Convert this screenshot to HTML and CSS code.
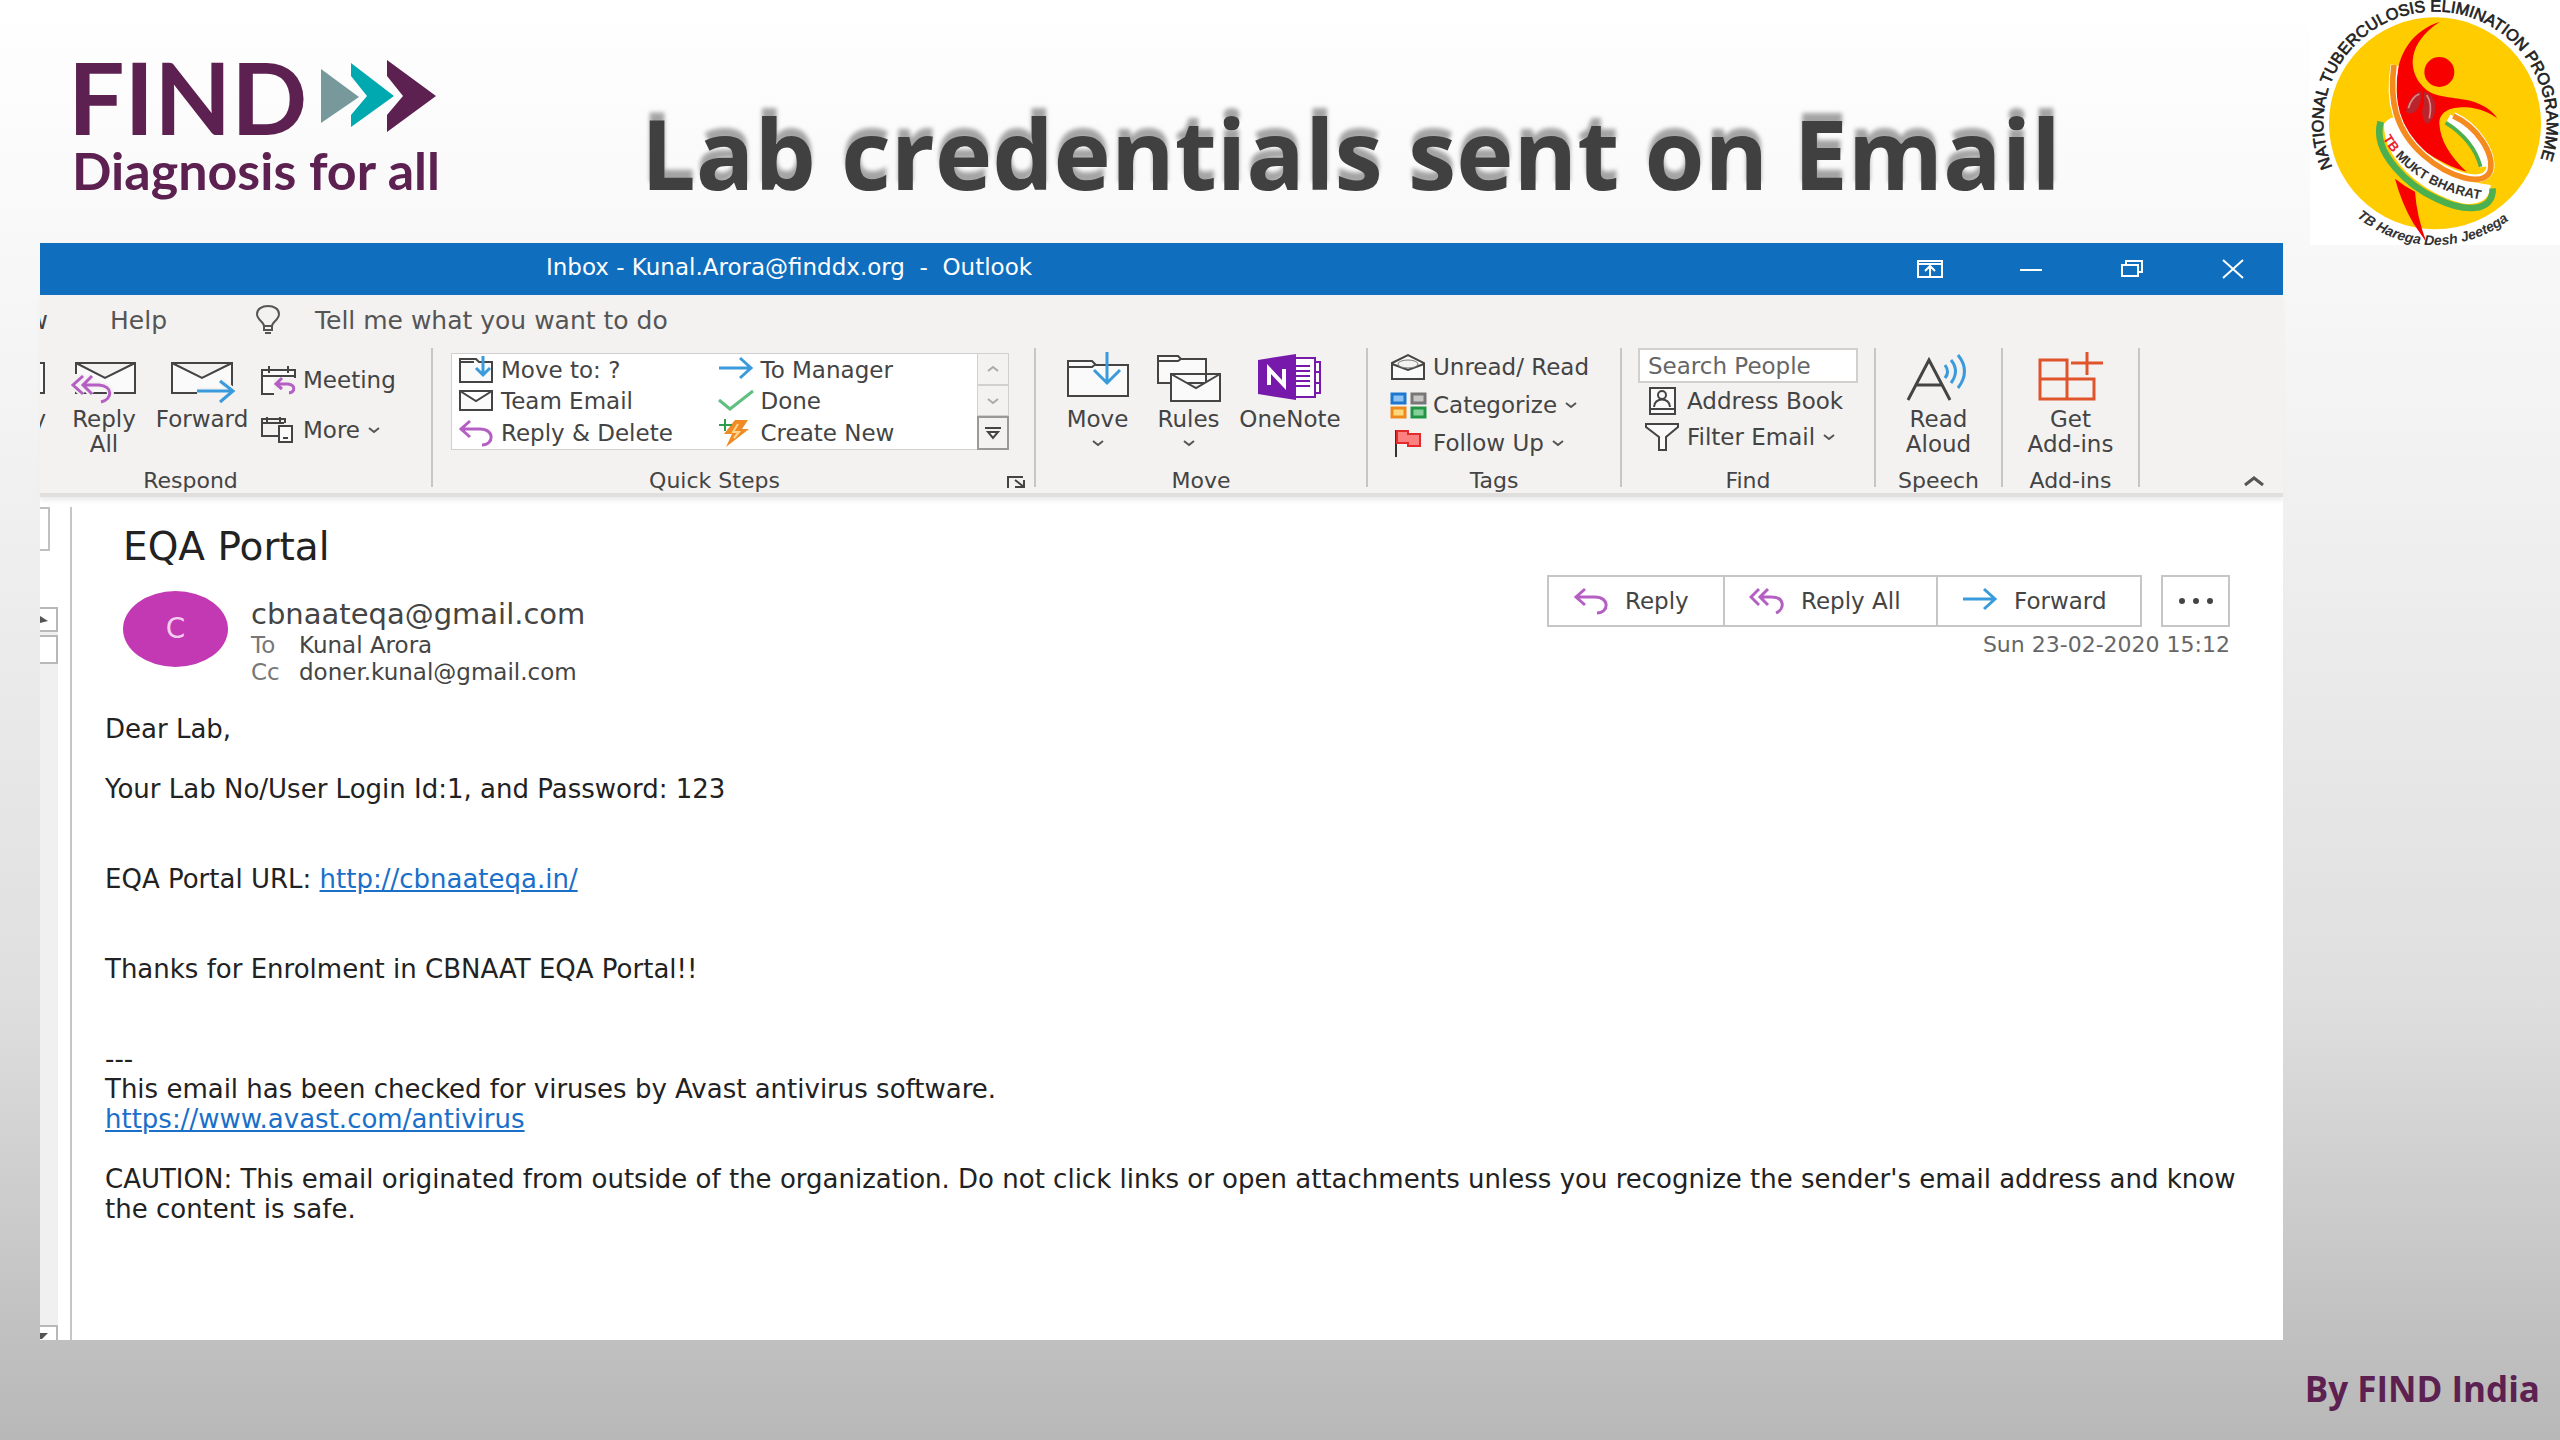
FILE: index.html
```html
<!DOCTYPE html>
<html lang="en">
<head>
<meta charset="utf-8">
<title>Lab credentials sent on Email</title>
<link rel="stylesheet" href="styles.css">
</head>
<body>
<svg class="sprite" aria-hidden="true">
  <symbol id="reply" viewBox="0 0 36 28"><path d="M12 2 3 10l9 8M3 10h19c15 0 14 16 2 16" fill="none" stroke="#b55fc4" stroke-width="3"/></symbol>
  <symbol id="reply-all" viewBox="0 0 36 28"><path d="M10 2 2 10l8 8M19 2l-8 8 8 8M11 10h11c14 0 14 12 5 16" fill="none" stroke="#b55fc4" stroke-width="3"/></symbol>
  <symbol id="arrow" viewBox="0 0 36 28"><path d="M1 12h32M22 2l11 10-11 10" fill="none" stroke="#3a9bdc" stroke-width="3"/></symbol>
  <symbol id="chev" viewBox="0 0 14 8"><path d="M2 2l5 4 5-4" fill="none" stroke="#555" stroke-width="2"/></symbol>
  <symbol id="chev-up" viewBox="0 0 22 12"><path d="M2 10l9-7 9 7" fill="none" stroke="#555" stroke-width="3"/></symbol>
  <symbol id="mail" viewBox="0 0 36 28"><path d="M2 4h32v19H2zM2 4l16 10L34 4" fill="#fafafa" stroke="#444" stroke-width="2"/></symbol>
</svg>
<main class="slide">
  <header class="slide-head">
    <div class="brand">
      <div class="brand-top">
        <span class="brand-name">FIND</span>
        <svg class="brand-arrows" viewBox="0 0 116 74" aria-hidden="true"><path d="M0 10l38 28L0 64z" fill="#77999b"/><path d="M30 4l43 33-43 31V56l16-19-16-20z" fill="#00a9b0"/><path d="M66 1l49 36-49 36V56l16-19-16-20z" fill="#5c2150"/></svg>
      </div>
      <div class="brand-tag">Diagnosis for all</div>
    </div>
    <h1 class="slide-title">Lab credentials sent on Email</h1>
    <svg class="emblem" viewBox="90 0 750 735" role="img" aria-label="National Tuberculosis Elimination Programme">
      <rect x="90" width="750" height="735" fill="#fff"/>
      <circle cx="465" cy="370" r="318" fill="#fc0"/>
      <path d="M312 372C330 350 345 350 350 360 380 430 470 520 570 545L632 555C630 600 600 612 560 612 470 600 310 500 312 372z" fill="#fff"/>
      <path d="M505 355Q595 405 612 500" fill="none" stroke="#fff" stroke-width="26"/>
      <path d="M497 368Q580 420 602 500" fill="none" stroke="#4cb050" stroke-width="11"/>
      <path d="M480 65C400 90 350 160 350 250 348 340 370 400 430 450 470 480 520 505 560 515 510 470 480 420 478 370 478 330 520 320 560 322 600 325 630 340 652 355 630 320 580 300 540 297 500 290 450 290 425 255 385 210 380 130 480 65z" fill="#f90000"/>
      <circle cx="478" cy="216" r="45" fill="#f90000"/>
      <path d="M345 536Q365 610 400 670L440 728Q410 650 405 575 375 560 345 536z" fill="#f90000"/>
      <path d="M378 335Q385 285 425 273 425 320 405 335 390 345 378 335zM432 275Q470 285 466 330 460 365 440 372 418 350 432 310z" fill="#b8252d"/>
      <path d="M385 325Q395 290 418 282M440 285Q458 310 448 355" fill="none" stroke="#df8c8c" stroke-width="5"/>
      <path d="M344 195C325 300 345 390 430 465 510 530 610 560 630 510 640 460 590 380 520 348" fill="none" stroke="#fff" stroke-width="24"/>
      <path d="M342 195C328 300 345 390 430 465 510 535 610 560 630 515 645 460 590 380 520 348" fill="none" stroke="#f58a1f" stroke-width="17"/>
      <path d="M302 365C275 460 390 560 470 596 550 635 640 640 638 565" fill="none" stroke="#4cb050" stroke-width="20"/>
      <path id="arc-top" d="M157 501A335 335 0 1 1 773 501" fill="none"/>
      <path id="arc-bottom" d="M230 650A366 366 0 0 0 702 648" fill="none"/>
      <path id="arc-band" d="M308 415Q400 575 640 605" fill="none"/>
      <text class="em-top"><textPath href="#arc-top">NATIONAL TUBERCULOSIS ELIMINATION PROGRAMME</textPath></text>
      <text class="em-bottom"><textPath href="#arc-bottom">TB Harega Desh Jeetega</textPath></text>
      <text class="em-band"><textPath href="#arc-band"><tspan fill="#e8202a">TB</tspan> MUKT BHARAT</textPath></text>
    </svg>
  </header>

  <section class="window">
    <div class="titlebar">
      <span class="titlebar-text">Inbox - Kunal.Arora@finddx.org&nbsp; -&nbsp; Outlook</span>
      <div class="win-controls">
        <button class="win-btn" aria-label="Ribbon display options"><svg width="28" height="20" viewBox="0 0 28 20"><path d="M2 2h24v16H2zM2 5h24M14 17V8M9 12l5-5 5 5" fill="none" stroke="#fff" stroke-width="2"/></svg></button>
        <button class="win-btn" aria-label="Minimize"><svg width="28" height="20" viewBox="0 0 28 20"><path d="M3 11h22" stroke="#fff" stroke-width="2"/></svg></button>
        <button class="win-btn" aria-label="Restore"><svg width="28" height="20" viewBox="0 0 28 20"><path d="M4 6h16v11H4zM8 6V2h16v11h-4" fill="none" stroke="#fff" stroke-width="2"/></svg></button>
        <button class="win-btn" aria-label="Close"><svg width="28" height="20" viewBox="0 0 28 20"><path d="M4 1l20 18M24 1L4 19" stroke="#fff" stroke-width="2"/></svg></button>
      </div>
    </div>

    <div class="ribbon">
      <nav class="tabs">
        <span class="tab-cut">w</span>
        <a class="tab" href="#help">Help</a>
        <svg width="26" height="30" viewBox="0 0 26 30" aria-hidden="true"><path d="M9 21c0-4-7-6-7-12C2 4 7 1 13 1s11 3 11 8c0 6-7 8-7 12zM9 21v4h8v-4M10 28h6" fill="none" stroke="#555" stroke-width="2"/></svg>
        <a class="tell" href="#tell">Tell me what you want to do</a>
      </nav>
      <div class="groups">
        <div class="group">
          <div class="group-body">
            <div class="cut"><svg width="6" height="48" viewBox="0 0 6 48" aria-hidden="true"><path d="M0 11h4v30H0" fill="#fafafa" stroke="#444" stroke-width="2"/></svg><span>y</span></div>
            <button class="big w96"><svg width="66" height="48" viewBox="0 0 66 48"><path d="M5 11h59v30H5zM5 11l29 15 30-15" fill="#fafafa" stroke="#444" stroke-width="2"/><path d="M0 22h14v18H6v-4H0z" fill="#f3f2f1"/><path d="M12 24 2 33l10 9M21 24l-9 9 9 9M12 33h17c14 2 14 15 0 18" fill="none" stroke="#f3f2f1" stroke-width="7"/><path d="M12 24 2 33l10 9M21 24l-9 9 9 9M12 33h16c14 1 14 14 2 17" fill="none" stroke="#b55fc4" stroke-width="3"/></svg><span>Reply<br>All</span></button>
            <button class="big w100"><svg width="66" height="48" viewBox="0 0 66 48"><path d="M3 11h60v30H3zM3 11l30 15 30-15" fill="#fafafa" stroke="#444" stroke-width="2"/><path d="M28 39h36M52 29l12 10-12 10" fill="none" stroke="#f3f2f1" stroke-width="7"/><path d="M28 39h36M51 29l13 10-13 11" fill="none" stroke="#3a9bdc" stroke-width="3"/></svg><span>Forward</span></button>
            <div class="stack stack-wide">
              <button class="row"><svg width="36" height="30" viewBox="0 0 36 30"><path d="M2 5h33v24H2zM2 11h33M9 1v7M28 1v7" fill="#fafafa" stroke="#444" stroke-width="2"/><path d="M14 13h24v18H14z" fill="#f3f2f1"/><path d="M22 13l-6 6 6 5M16 19h12c8 1 7 8 1 9" fill="none" stroke="#b55fc4" stroke-width="3"/></svg>Meeting</button>
              <button class="row"><svg width="36" height="30" viewBox="0 0 36 30"><path d="M18 21H2V4h23v4M2 8h22M7 2v5M20 2v5" fill="none" stroke="#444" stroke-width="2"/><path d="M19 11h13v16H19zM23 23h5" fill="#fafafa" stroke="#444" stroke-width="2"/></svg>More<svg class="chev"><use href="#chev"/></svg></button>
            </div>
          </div>
          <div class="label label-cut">Respond</div>
        </div>

        <div class="group">
          <div class="group-body quick">
            <div class="quick-list">
              <button class="row"><svg width="36" height="28" viewBox="0 0 36 28"><path d="M2 3h16l3 3h13v20H2zM2 6h14" fill="#fafafa" stroke="#444" stroke-width="2"/><path d="M25 0v18M18 12l7 7 7-7" fill="none" stroke="#3a9bdc" stroke-width="3"/></svg>Move to: ?</button>
              <button class="row"><svg width="36" height="28"><use href="#arrow"/></svg>To Manager</button>
              <button class="row"><svg width="36" height="28"><use href="#mail"/></svg>Team Email</button>
              <button class="row"><svg width="36" height="28" viewBox="0 0 36 28"><path d="M1 13l11 9L35 4" fill="none" stroke="#5fbf80" stroke-width="3"/></svg>Done</button>
              <button class="row"><svg width="36" height="28"><use href="#reply"/></svg>Reply &amp; Delete</button>
              <button class="row"><svg width="36" height="28" viewBox="0 0 36 28"><path d="M17 1h13l-6 9h7L8 28l6-13H6z" fill="#f08a24"/><path d="M20 5l-5 8h6l-5 6" fill="none" stroke="#ffd58a" stroke-width="2"/><path d="M1 6h13M7 0v12" stroke="#2e9e4f" stroke-width="2"/></svg>Create New</button>
            </div>
            <div class="quick-scroll">
              <button aria-label="Previous" class="dim"><svg class="chev" viewBox="0 0 14 8"><path d="M2 6l5-4 5 4" fill="none" stroke="#aaa" stroke-width="2"/></svg></button>
              <button aria-label="Next" class="dim"><svg class="chev" viewBox="0 0 14 8"><path d="M2 2l5 4 5-4" fill="none" stroke="#aaa" stroke-width="2"/></svg></button>
              <button aria-label="All quick steps"><svg width="16" height="14" viewBox="0 0 16 14"><path d="M0 2h16M3 6h10l-5 6z" fill="#fff" stroke="#444" stroke-width="2"/></svg></button>
            </div>
          </div>
          <div class="label"><span class="label-mid">Quick Steps</span><svg width="28" height="14" viewBox="0 0 28 14" aria-hidden="true"><path d="M2 13V2h15M9 5l9 7M18 5v7H9" fill="none" stroke="#444" stroke-width="2"/></svg></div>
        </div>

        <div class="group">
          <div class="group-body pad16">
            <button class="big w92"><svg width="66" height="48" viewBox="0 0 66 48"><path d="M3 9h24l4 4h32v31H3zM3 15h24l4-3" fill="#fafafa" stroke="#444" stroke-width="2"/><path d="M42 0v32M29 18l13 13 13-13" fill="none" stroke="#3a9bdc" stroke-width="3"/></svg><span>Move</span><svg class="chev"><use href="#chev"/></svg></button>
            <button class="big w92"><svg width="66" height="48" viewBox="0 0 66 48"><path d="M2 4h20l3 3h25v24H2zM2 9h20l3-2" fill="#fafafa" stroke="#444" stroke-width="2"/><path d="M15 22h49v27H15zM15 22l25 14 24-14" fill="#fafafa" stroke="#444" stroke-width="2"/></svg><span>Rules</span><svg class="chev"><use href="#chev"/></svg></button>
            <button class="big w112"><svg width="66" height="48" viewBox="0 0 66 48"><path d="M36 6h22v4h5v31h-5v4H36z" fill="#fff" stroke="#7719aa" stroke-width="2"/><path d="M38 14h15M38 19h15M38 24h15M38 29h15M38 34h15M58 10v31M58 20h5M58 31h5" stroke="#7719aa" stroke-width="2"/><path d="M1 8l38-6v46L1 42z" fill="#7719aa"/><path d="M12 33V17l15 16V17" fill="none" stroke="#fff" stroke-width="4"/></svg><span>OneNote</span></button>
          </div>
          <div class="label">Move</div>
        </div>

        <div class="group">
          <div class="group-body pad22">
            <div class="stack">
              <button class="row"><svg width="36" height="28" viewBox="0 0 36 28"><path d="M2 10l16-8 16 8v16H2zM2 11l16 6 16-6" fill="#fafafa" stroke="#444" stroke-width="2"/><ellipse cx="18" cy="11" rx="10" ry="4" fill="#f3f2f1" stroke="#777"/></svg>Unread/ Read</button>
              <button class="row"><svg width="36" height="28" viewBox="0 0 36 28"><g stroke-width="3"><path d="M2 3h13v9H2z" fill="#8cc3f2" stroke="#1f78d0"/><path d="M22 3h13v9H22z" fill="#c8c6c4" stroke="#797775"/><path d="M2 17h13v9H2z" fill="#fbd97c" stroke="#ee8a1c"/><path d="M22 17h13v9H22z" fill="#86d19a" stroke="#249544"/></g></svg>Categorize<svg class="chev"><use href="#chev"/></svg></button>
              <button class="row"><svg width="36" height="28" viewBox="0 0 36 28"><path d="M6 1v27" stroke="#333" stroke-width="2"/><path d="M7 2h11v3h12v12H18v-3H7z" fill="#fd8080" stroke="#e32b2b" stroke-width="2"/></svg>Follow Up<svg class="chev"><use href="#chev"/></svg></button>
            </div>
          </div>
          <div class="label">Tags</div>
        </div>

        <div class="group">
          <div class="group-body pad16">
            <div class="find">
              <input class="search" type="text" placeholder="Search People" aria-label="Search People">
              <button class="row"><svg width="36" height="28" viewBox="0 0 36 28"><path d="M6 1h25v26H6zM6 22h25" fill="#fafafa" stroke="#444" stroke-width="2"/><circle cx="18" cy="8" r="4" fill="none" stroke="#444" stroke-width="2"/><path d="M10 20c0-10 16-10 16 0" fill="none" stroke="#444" stroke-width="2"/></svg>Address Book</button>
              <button class="row"><svg width="36" height="28" viewBox="0 0 36 28"><path d="M2 1h32v3L22 14v13h-7V14L2 4z" fill="#fafafa" stroke="#444" stroke-width="2"/></svg>Filter Email<svg class="chev"><use href="#chev"/></svg></button>
            </div>
          </div>
          <div class="label">Find</div>
        </div>

        <div class="group">
          <div class="group-body mid">
            <button class="big"><svg width="66" height="48" viewBox="0 0 66 48"><path d="M2 48L23 8l21 40M9 33h28" fill="none" stroke="#444" stroke-width="3"/><path d="M39 13q5 7 0 13M45 8q9 11 0 23M52 3q13 16 0 33" fill="none" stroke="#3a9bdc" stroke-width="3"/></svg><span>Read<br>Aloud</span></button>
          </div>
          <div class="label">Speech</div>
        </div>

        <div class="group">
          <div class="group-body mid">
            <button class="big"><svg width="66" height="48" viewBox="0 0 66 48"><path d="M2 8h27v39H2zM2 27h54v20H29M49 0v23M33 11h32" fill="none" stroke="#e0542c" stroke-width="3"/></svg><span>Get<br>Add-ins</span></button>
          </div>
          <div class="label">Add-ins</div>
        </div>

        <div class="group-end"><button aria-label="Collapse the ribbon"><svg width="22" height="12"><use href="#chev-up"/></svg></button></div>
      </div>
    </div>

    <div class="content">
      <aside class="strip" aria-hidden="true">
        <div class="strip-top"><div class="strip-box"></div></div>
        <div class="strip-bar">
          <div class="strip-btn"><svg width="10" height="10" viewBox="0 0 10 10"><path d="M0 1l8 5-8 2z" fill="#555"/></svg></div>
          <div class="strip-thumb"></div>
          <div class="strip-end"><svg width="10" height="8" viewBox="0 0 10 8"><path d="M0 2h8L2 8H0z" fill="#555"/></svg></div>
        </div>
      </aside>
      <article class="message">
        <h2 class="subject">EQA Portal</h2>
        <div class="meta">
          <div class="avatar">C</div>
          <div class="from">
            <div class="sender">cbnaateqa@gmail.com</div>
            <div class="to"><span class="dt">To</span>Kunal Arora</div>
            <div class="to"><span class="dt">Cc</span>doner.kunal@gmail.com</div>
          </div>
          <div class="actions">
            <div class="action-row">
              <div class="action-set">
                <button class="act act-1"><svg width="36" height="28"><use href="#reply"/></svg>Reply</button>
                <button class="act act-2"><svg width="36" height="28"><use href="#reply-all"/></svg>Reply All</button>
                <button class="act act-3"><svg width="36" height="28"><use href="#arrow"/></svg>Forward</button>
              </div>
              <button class="dots" aria-label="More actions"><svg width="34" height="6" viewBox="0 0 34 6"><g fill="#444"><circle cx="3" cy="3" r="3"/><circle cx="17" cy="3" r="3"/><circle cx="31" cy="3" r="3"/></g></svg></button>
            </div>
            <time class="date">Sun 23-02-2020 15:12</time>
          </div>
        </div>
        <div class="text">
          <p>Dear Lab,</p>
          <p class="wide">Your Lab No/User Login Id:1, and Password: 123</p>
          <p class="wide">EQA Portal URL: <a href="http://cbnaateqa.in/">http://cbnaateqa.in/</a></p>
          <p class="wide">Thanks for Enrolment in CBNAAT EQA Portal!!</p>
          <p>---<br>This email has been checked for viruses by Avast antivirus software.<br><a href="https://www.avast.com/antivirus">https://www.avast.com/antivirus</a></p>
          <p>CAUTION: This email originated from outside of the organization. Do not click links or open attachments unless you recognize the sender's email address and know the content is safe.</p>
        </div>
      </article>
    </div>
  </section>
  <footer class="credit">By FIND India</footer>
</main>
</body>
</html>
```
FILE: styles.css
```css
* { box-sizing: border-box; }
body { margin: 0; font-family: "DejaVu Sans", "Noto Sans", sans-serif; color: #444; }
button { font: inherit; color: inherit; background: none; border: 0; padding: 0; }
svg { display: block; flex: none; overflow: visible; }
.sprite { position: absolute; width: 0; height: 0; }

.slide {
  min-height: 100vh;
  display: flex;
  flex-direction: column;
  background: linear-gradient(#fff 0%, #f8f8f8 17%, #f0f0f0 35%, #dfdfdf 69%, #c0c0c0 93%, #b8b8b8 100%);
}
.slide-head { display: flex; align-items: flex-start; height: 243px; padding-left: 68px; }
.brand { padding-top: 48px; color: #5c2150; font-family: Lato, sans-serif; font-weight: 700; }
.brand-top { display: flex; align-items: center; gap: 14px; height: 96px; }
.brand-name { font-size: 100px; line-height: 96px; }
.brand-arrows { width: 116px; height: 74px; }
.brand-tag { padding-left: 4px; font-size: 52px; line-height: 52px; }
.slide-title {
  flex: 1;
  margin: 0;
  padding: 82px 48px 0 0;
  text-align: center;
  font: 700 97px/140px "Open Sans", sans-serif;
  color: #404040;
  text-shadow: 0 -8px 4px rgba(0, 0, 0, .35);
}
.emblem { width: 250px; height: 245px; }
.em-top { font: 49px "Liberation Sans", sans-serif; fill: #222; stroke: #222; stroke-width: 2; }
.em-bottom { font: italic 700 42px "Liberation Sans", sans-serif; fill: #333; }
.em-band { font: 700 40px "Liberation Sans", sans-serif; fill: #333; }

.window { flex: 1; display: flex; flex-direction: column; margin: 0 277px 0 40px; background: #fff; }
.titlebar { display: flex; justify-content: space-between; align-items: center; height: 52px; padding: 0 36px 0 506px; background: #106ebe; color: #fff; font-size: 23px; }
.titlebar-text { line-height: 48px; padding-bottom: 4px; }
.win-controls { display: flex; gap: 73px; }

.ribbon { background: #f3f2f1; border-bottom: 4px solid #e1dfdd; font-size: 23px; box-shadow: 0 4px 4px #eee; }
.tabs { display: flex; align-items: center; height: 53px; padding-bottom: 3px; font-size: 25px; }
.tabs a { color: #555; text-decoration: none; }
.tab-cut { display: flex; justify-content: flex-end; width: 8px; overflow: hidden; }
.tab { padding: 0 88px 0 62px; }
.tell { padding-left: 34px; }
.groups { display: grid; grid-template-columns: 393fr 603fr 332fr 254fr 254fr 127fr 137fr 143fr; height: 145px; padding-bottom: 6px; }
.group { display: flex; flex-direction: column; min-width: 0; border-right: 2px solid #c8c6c4; }
.group-body { display: flex; flex: 1; align-items: flex-start; }
.pad16 { padding-left: 16px; }
.pad22 { padding-left: 22px; }
.mid { justify-content: center; }
.label { display: flex; justify-content: center; height: 12px; font-size: 22px; line-height: 12px; }
.label-mid { flex: 1; text-align: center; padding-right: 10px; }
.label-cut { padding-right: 90px; }
.big { display: flex; flex-direction: column; align-items: center; gap: 7px; padding-top: 4px; line-height: 25px; text-align: center; }
.w92 { width: 91px; }
.w96 { width: 96px; }
.w100 { width: 100px; }
.w112 { width: 112px; }
.cut { display: flex; flex-direction: column; align-items: flex-end; gap: 7px; width: 6px; margin-right: 10px; padding-top: 4px; line-height: 25px; overflow: hidden; }
.chev { width: 14px; height: 8px; }
.stack { display: flex; flex-direction: column; }
.stack .row { height: 38px; }
.stack-wide { padding: 7px 0 0 8px; }
.stack-wide .row { height: 50px; }
.row { display: flex; align-items: center; gap: 7px; text-align: left; white-space: nowrap; }
.quick { padding: 5px 25px 0 18px; }
.quick-list { flex: 1; display: grid; grid-template-columns: 1fr 1fr; height: 97px; padding-left: 6px; background: #fff; border: 1px solid #d2d0ce; border-right: 0; }
.quick-scroll { display: flex; flex-direction: column; width: 32px; height: 97px; }
.quick-scroll button { flex: 1; display: flex; align-items: center; justify-content: center; border: 2px solid #999; }
.quick-scroll .dim { border: 1px solid #d2d0ce; }
.find { display: flex; flex-direction: column; width: 220px; }
.find .row { height: 36px; padding-left: 6px; }
.search { width: 100%; height: 35px; padding: 0 8px; border: 2px solid #d2d0ce; background: #fff; font: 23px "DejaVu Sans", sans-serif; }
.search::placeholder { color: #666; opacity: 1; }
.group-end { display: flex; align-items: flex-end; justify-content: flex-end; padding-right: 18px; }

.content { flex: 1; display: flex; padding-top: 10px; }
.strip { display: flex; flex-direction: column; width: 32px; border-right: 2px solid #c8c6c4; }
.strip-top { height: 100px; }
.strip-box { width: 10px; height: 44px; border: 2px solid #c0c0c0; border-left: 0; }
.strip-bar { flex: 1; display: flex; flex-direction: column; width: 18px; background: #f0f0f0; }
.strip-btn { height: 25px; padding-top: 6px; background: #fff; border: 2px solid #b8b8b8; border-left: 0; }
.strip-thumb { height: 29px; margin-top: 3px; background: #fff; border: 2px solid #b8b8b8; border-left: 0; }
.strip-end { height: 15px; margin-top: auto; padding-top: 4px; background: #fff; border: 2px solid #b8b8b8; border-width: 2px 2px 0 0; }
.message { flex: 1; padding: 16px 40px 0 33px; }
.subject { margin: 0 0 20px 18px; font-size: 39px; font-weight: 400; line-height: 48px; color: #222; }
.meta { display: flex; padding: 0 13px 0 18px; }
.avatar { width: 105px; height: 76px; border-radius: 50%; background: #c239b3; color: #f3cdef; font-size: 28px; line-height: 76px; text-align: center; }
.from { flex: 1; padding: 5px 0 0 23px; font-size: 23px; line-height: 27px; }
.sender { font-size: 29px; line-height: 36px; }
.to { display: flex; }
.dt { width: 48px; color: #777; }
.actions { display: flex; flex-direction: column; align-items: flex-end; margin-top: -16px; font-size: 23px; }
.action-row { display: flex; gap: 19px; }
.action-set { display: flex; height: 52px; border: 2px solid #c6c6c6; }
.act { display: flex; align-items: center; gap: 16px; padding-left: 24px; white-space: nowrap; }
.act + .act { border-left: 2px solid #c6c6c6; }
.act-1 { width: 174px; }
.act-2 { width: 213px; }
.act-3 { width: 204px; }
.dots { display: flex; align-items: center; justify-content: center; width: 69px; border: 2px solid #c6c6c6; }
.date { padding-top: 4px; line-height: 28px; font-size: 22px; color: #666; }
.text { padding-top: 28px; color: #222; font-size: 26px; line-height: 30px; }
.text p { margin: 0 0 30px; }
.text .wide { margin-bottom: 60px; }
.text a { color: #1a6fc9; }
.credit { height: 100px; padding-right: 20px; text-align: right; font: 700 35px/98px "Open Sans", sans-serif; color: #5c2150; }
```
